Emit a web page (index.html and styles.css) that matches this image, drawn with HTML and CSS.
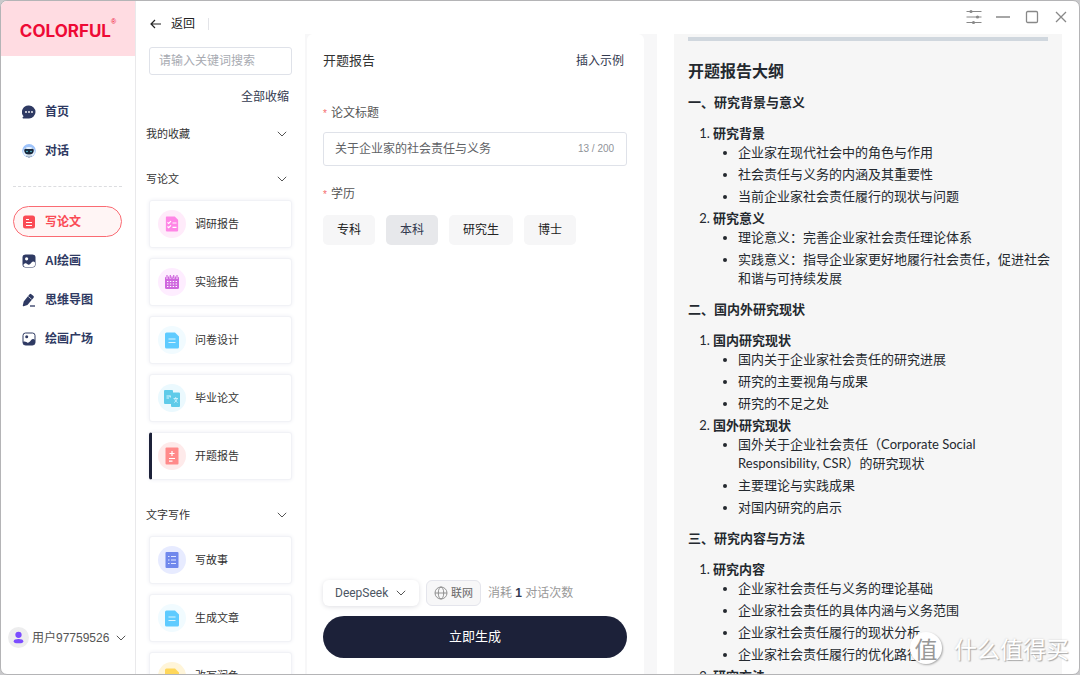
FILE: index.html
```html
<!DOCTYPE html>
<html lang="zh-CN">
<head>
<meta charset="utf-8">
<title>开题报告</title>
<link rel="stylesheet" href="styles.css">
</head>
<body>
<svg class="defs" aria-hidden="true">
  <symbol id="chev" viewBox="0 0 10 6"><path d="M.8.8 5 5 9.2.8" fill="none" stroke="currentColor" stroke-width="1"/></symbol>
  <symbol id="page" viewBox="0 0 14 16"><path d="M1.500 0H10l4 4v10.500a1.500 1.500 0 0 1-1.500 1.500h-11A1.500 1.500 0 0 1 0 14.500v-13A1.500 1.500 0 0 1 1.500 0z" fill="currentColor"/></symbol>
</svg>
<div class="window">
  <aside class="sidebar">
    <div class="brand"><span class="brand-name">COLORFUL</span><sup class="brand-reg">®</sup></div>
    <nav class="nav">
      <a class="nav-item" href="#"><svg class="nav-icon" viewBox="0 0 14 14"><path d="M7 .5a6.500 6.500 0 1 1 0 13H1.200a.7.7 0 0 1-.5-1.200l.9-1A6.500 6.500 0 0 1 7 .5z" fill="#2f3a63"/><g fill="#fff"><circle cx="4" cy="7" r=".9"/><circle cx="7" cy="7" r=".9"/><circle cx="10" cy="7" r=".9"/></g></svg>首页</a>
      <a class="nav-item" href="#"><svg class="nav-icon" viewBox="0 0 14 14"><circle cx="7" cy="6.800" r="6.800" fill="#9dc3fb"/><ellipse cx="7" cy="8" rx="5.800" ry="5" fill="#eaf4ff"/><path d="M2.200 6.300c0-1.200 1-1.500 2-1.500 1 .4 4.600.4 5.600 0 1 0 2 .3 2 1.500 0 2.800-1.500 4.200-4.800 4.200S2.200 9.100 2.200 6.300z" fill="#17283d"/><circle cx="5" cy="7.500" r=".8" fill="#5dd5e8"/><circle cx="9" cy="7.500" r=".8" fill="#5dd5e8"/><path d="M5 11.500v1.500M7 11.500v2.500M9 11.500v1.500" stroke="#56677a" stroke-width=".7"/></svg>对话</a>
      <hr class="nav-rule">
      <a class="nav-item active" href="#"><svg class="nav-icon" viewBox="0 0 14 14"><rect x="1" y=".5" width="12" height="13" rx="2.500" fill="#fa4b55"/><path d="M4 4.500h3M4 7.500h6M4 10.500h6" stroke="#fff" stroke-width="1.200"/></svg>写论文</a>
      <a class="nav-item" href="#"><svg class="nav-icon" viewBox="0 0 14 14"><rect x=".5" y=".5" width="13" height="13" rx="3" fill="#2f3a63"/><circle cx="4.600" cy="4.800" r="1.600" fill="#fff"/><path d="M1.500 10.500c2-2.500 3.500-1 4.500 0s2.500-.5 3.500-2 2.500-1.500 3.500 0v2a2.500 2.500 0 0 1-2.500 2.500h-7a2 2 0 0 1-2-2.500z" fill="#fff"/></svg>AI绘画</a>
      <a class="nav-item" href="#"><svg class="nav-icon" viewBox="0 0 14 14"><path d="M7.600 1.200a1.200 1.200 0 0 1 1.700 0l2.200 1.900a1.200 1.200 0 0 1 .1 1.600L5.400 12.100l-3.800 1.100a.6.600 0 0 1-.8-.8L1.700 8.400z" fill="#2f3a63"/><path d="M6.300 3.500l3.300 2.800" stroke="#fff" stroke-width=".7"/><path d="M8 13h5" stroke="#2f3a63" stroke-width="1.300"/></svg>思维导图</a>
      <a class="nav-item" href="#"><svg class="nav-icon" viewBox="0 0 14 14"><rect x="1" y="1" width="12" height="12" rx="2.500" fill="none" stroke="#2f3a63"/><circle cx="4.700" cy="4.800" r="1.500" fill="#2f3a63"/><path d="M1 9.800c2.500-.8 3.500.6 4.500.9s2.300-.8 3.500-2.500 3-1.600 4 0v3A2.500 2.500 0 0 1 10.500 13h-7A2.500 2.500 0 0 1 1 10.500z" fill="#2f3a63"/></svg>绘画广场</a>
    </nav>
    <button class="user" type="button">
      <svg class="avatar" viewBox="0 0 22 22"><circle cx="11" cy="11" r="11" fill="#ededee"/><circle cx="11" cy="8.200" r="3.300" fill="#7c4dff"/><ellipse cx="11" cy="14.800" rx="5" ry="2.300" fill="#7c4dff"/></svg>
      <span>用户97759526</span><svg class="chev"><use href="#chev"/></svg>
    </button>
  </aside>

  <div class="main">
    <header class="topbar">
      <button class="back" type="button"><svg class="back-icon" viewBox="0 0 12 10"><path d="M11 5H1.200M5 1 1 5l4 4" fill="none" stroke="#222" stroke-width="1.200"/></svg>返回</button>
      <div class="controls">
        <button type="button" aria-label="设置"><svg viewBox="0 0 16 16"><path d="M.5 2.500h15M.5 8h15M.5 13.500h15" stroke="#888" stroke-width="1"/><g fill="#888"><circle cx="5" cy="2.500" r="1.600"/><circle cx="11.500" cy="8" r="1.600"/><circle cx="7.500" cy="13.500" r="1.600"/></g></svg></button>
        <button type="button" aria-label="最小化"><svg viewBox="0 0 16 16"><path d="M1 8h14" stroke="#888" stroke-width="1.400"/></svg></button>
        <button type="button" aria-label="最大化"><svg viewBox="0 0 16 16"><rect x="2.500" y="2.500" width="11" height="11" rx="1.200" fill="none" stroke="#888" stroke-width="1.300"/></svg></button>
        <button type="button" aria-label="关闭"><svg viewBox="0 0 16 16"><path d="m3 3 10 10M13 3 3 13" stroke="#888" stroke-width="1.300"/></svg></button>
      </div>
    </header>

    <div class="columns">
      <section class="catalog">
        <input class="search" type="text" placeholder="请输入关键词搜索" aria-label="搜索">
        <button class="collapse" type="button">全部收缩</button>
        <button class="group" type="button">我的收藏<svg class="chev"><use href="#chev"/></svg></button>
        <button class="group" type="button">写论文<svg class="chev"><use href="#chev"/></svg></button>
        <div class="cards">
          <button class="card" type="button"><svg class="card-icon" viewBox="0 0 28 28"><circle cx="14" cy="14" r="14" fill="#ffebfa"/><svg class="pink" x="7.500" y="6" width="13" height="16"><use href="#page"/></svg><path d="m9.500 12.300 1.200 1.200 2.300-2.400M9.500 16.500l1.200 1.200 2.300-2.400M14.500 13h4M14.500 17.300h4" fill="none" stroke="#fff" stroke-width="1.200"/></svg>调研报告</button>
          <button class="card" type="button"><svg class="card-icon" viewBox="0 0 28 28"><circle cx="14" cy="14" r="14" fill="#feedff"/><rect x="7" y="8.500" width="14" height="12.500" rx="1.500" fill="#cf66de"/><path d="M9 7.500v3M12.300 7.500v3M15.700 7.500v3M19 7.500v3" stroke="#feedff" stroke-width="2"/><path d="M9 7v3M12.300 7v3M15.700 7v3M19 7v3" stroke="#cf66de" stroke-width="1.200"/><path d="M9 13.500h10M9 16h10M9 18.500h10" stroke="#fff" stroke-width="1.200" stroke-dasharray="1.400 1.460"/></svg>实验报告</button>
          <button class="card" type="button"><svg class="card-icon" viewBox="0 0 28 28"><circle cx="14" cy="14" r="14" fill="#f1fbff"/><svg class="blue" x="7" y="6" width="14" height="17"><use href="#page"/></svg><path d="M10.500 13h7M10.500 16.500h7" stroke="#d9f5ff" stroke-width="1.200"/></svg>问卷设计</button>
          <button class="card" type="button"><svg class="card-icon" viewBox="0 0 28 28"><circle cx="14" cy="14" r="14" fill="#ebf9fe"/><path d="M6 7a1 1 0 0 1 1-1h7a1 1 0 0 1 1 1v1.500h6a1 1 0 0 1 1 1V22a1 1 0 0 1-1 1h-7a1 1 0 0 1-1-1v-2H7a1 1 0 0 1-1-1z" fill="#5fcbe9"/><path d="M8.500 12h3.500M8.500 14h2.500M12.300 11.500v2" stroke="#d9f5ff" stroke-width="1"/><path d="M15.500 14.500h4.500M17.700 13v1.500M16.200 18.500c1.500-.8 2.500-2 2.800-3.800M19.500 18.500c-1.500-.8-2.500-2-2.800-3.800" fill="none" stroke="#d9f5ff" stroke-width=".8"/></svg>毕业论文</button>
          <button class="card selected" type="button"><svg class="card-icon" viewBox="0 0 28 28"><circle cx="14" cy="14" r="14" fill="#feeaea"/><rect x="7.500" y="5.500" width="13" height="17" rx="1" fill="#ff8a8a"/><path d="M11.500 11.500h5M14 9v5M11 16.500h6M11 19.200h3.500" stroke="#fff" stroke-width="1.200"/></svg>开题报告</button>
        </div>
        <button class="group" type="button">文字写作<svg class="chev"><use href="#chev"/></svg></button>
        <div class="cards">
          <button class="card" type="button"><svg class="card-icon" viewBox="0 0 28 28"><circle cx="14" cy="14" r="14" fill="#e7ebff"/><rect x="7.500" y="6" width="13" height="16" rx="1" fill="#7088ec"/><path d="M10 10.500h1.500M13 10.500h5M10 14h1.500M13 14h5M10 17.500h1.500M13 17.500h5" stroke="#dfe5ff" stroke-width="1.100"/></svg>写故事</button>
          <button class="card" type="button"><svg class="card-icon" viewBox="0 0 28 28"><circle cx="14" cy="14" r="14" fill="#f1fbff"/><svg class="blue" x="7" y="6" width="14" height="17"><use href="#page"/></svg><path d="M10.500 13h7M10.500 16.500h7" stroke="#d9f5ff" stroke-width="1.200"/></svg>生成文章</button>
          <button class="card" type="button"><svg class="card-icon" viewBox="0 0 28 28"><circle cx="14" cy="14" r="14" fill="#fff5d9"/><svg class="yellow" x="7" y="6" width="14" height="17"><use href="#page"/></svg></svg>改写润色</button>
        </div>
      </section>

      <div class="work">
        <form class="form">
          <div class="form-head"><h1 class="form-title">开题报告</h1><button class="example" type="button">插入示例</button></div>
          <label class="label" for="topic"><span class="star">*</span>论文标题</label>
          <div class="field"><input id="topic" class="field-input" type="text" value="关于企业家的社会责任与义务"><span class="count">13 / 200</span></div>
          <div class="label" id="degree"><span class="star">*</span>学历</div>
          <div class="choices" role="group" aria-labelledby="degree">
            <button class="choice" type="button">专科</button><button class="choice on" type="button" aria-pressed="true">本科</button><button class="choice" type="button">研究生</button><button class="choice" type="button">博士</button>
          </div>
          <div class="options">
            <div class="model"><select class="model-select" aria-label="模型"><option>DeepSeek</option></select><svg class="chev model-chev"><use href="#chev"/></svg></div>
            <button class="online" type="button"><svg class="globe" viewBox="0 0 14 14"><g fill="none" stroke="#888" stroke-width=".9"><circle cx="7" cy="7" r="6"/><ellipse cx="7" cy="7" rx="2.700" ry="6"/><path d="M1 7h12"/></g></svg>联网</button>
            <span class="cost">消耗 <b>1</b> 对话次数</span>
          </div>
          <button class="submit" type="button">立即生成</button>
        </form>
      </div>

      <article class="doc">
        <hr class="doc-rule">
        <h2>开题报告大纲</h2>
        <h3>一、研究背景与意义</h3>
        <ol>
          <li><strong>研究背景</strong>
            <ul><li>企业家在现代社会中的角色与作用</li><li>社会责任与义务的内涵及其重要性</li><li>当前企业家社会责任履行的现状与问题</li></ul></li>
          <li><strong>研究意义</strong>
            <ul><li>理论意义：完善企业家社会责任理论体系</li><li>实践意义：指导企业家更好地履行社会责任，促进社会和谐与可持续发展</li></ul></li>
        </ol>
        <h3>二、国内外研究现状</h3>
        <ol>
          <li><strong>国内研究现状</strong>
            <ul><li>国内关于企业家社会责任的研究进展</li><li>研究的主要视角与成果</li><li>研究的不足之处</li></ul></li>
          <li><strong>国外研究现状</strong>
            <ul><li>国外关于企业社会责任（Corporate Social Responsibility, CSR）的研究现状</li><li>主要理论与实践成果</li><li>对国内研究的启示</li></ul></li>
        </ol>
        <h3>三、研究内容与方法</h3>
        <ol>
          <li><strong>研究内容</strong>
            <ul><li>企业家社会责任与义务的理论基础</li><li>企业家社会责任的具体内涵与义务范围</li><li>企业家社会责任履行的现状分析</li><li>企业家社会责任履行的优化路径</li></ul></li>
          <li><strong>研究方法</strong></li>
        </ol>
      </article>
    </div>
  </div>
  <div class="watermark"><span class="mark">值</span><span>什么值得买</span></div>
</div>
</body>
</html>
```
FILE: styles.css
```css
* { box-sizing: border-box; }
body {
  margin: 0;
  background: #c9c9cb;
  color: #333;
  font: 12px/20px "Liberation Sans", "Noto Sans CJK SC", sans-serif;
}
button, input, select { font: inherit; color: inherit; }
button { padding: 0; border: 0; background: none; cursor: pointer; }
svg { flex: none; display: block; }
.defs { position: absolute; width: 0; height: 0; }
.chev { width: 10px; height: 6px; color: #555; }

.window {
  position: relative;
  display: flex;
  height: 100vh;
  overflow: hidden;
  background: #fff;
  border: 1px solid #b4b4b6;
  border-radius: 7px;
}

/* Sidebar */
.sidebar {
  display: flex;
  flex-direction: column;
  flex: none;
  width: 135px;
  border-right: 1px solid #e9e9eb;
}
.brand {
  display: flex;
  align-items: center;
  justify-content: center;
  height: 55px;
  padding-top: 4px;
  background: #ffdce2;
  color: #ee0a35;
}
.brand-name { font: 700 17px/20px Inter, sans-serif; }
.brand-reg { align-self: flex-start; padding-top: 10px; font-size: 7px; line-height: 14px; }
.nav { display: flex; flex-direction: column; gap: 8px; padding: 40px 13px 0 12px; }
.nav-item {
  display: flex;
  align-items: center;
  gap: 9px;
  height: 31px;
  padding-left: 8px;
  border: 1px solid transparent;
  border-radius: 16px;
  color: #2f3a63;
  font-weight: 700;
  text-decoration: none;
}
.nav-item.active { border-color: #fa6b73; background: #fff5f5; color: #fa4b55; }
.nav-icon { width: 14px; height: 14px; }
.nav-rule { width: 100%; margin: 12px 0 11px; border: 0; border-top: 1px dashed #dcdde0; }
.user {
  display: flex;
  align-items: center;
  gap: 3px;
  margin: auto 0 26px 7px;
  color: #555;
}
.user .chev { margin-left: 4px; }
.avatar { width: 21px; height: 21px; }

/* Top bar */
.main { display: flex; flex-direction: column; flex: 1; min-width: 0; }
.topbar { display: flex; justify-content: space-between; flex: none; height: 33px; }
.back {
  display: flex;
  align-items: center;
  gap: 9px;
  height: 12px;
  margin: 17px 0 0 14px;
  padding-right: 13px;
  border-right: 1px solid #e3e4e8;
  color: #222;
}
.back-icon { width: 12px; height: 10px; }
.controls { display: flex; gap: 13px; padding: 8px 10px 0 0; }
.controls button { height: 16px; }
.controls svg { width: 16px; height: 16px; }

.columns {
  display: grid;
  grid-template-columns: 169px minmax(0, 20fr) minmax(0, 23fr);
  flex: 1;
  min-height: 0;
  padding-right: 17px;
}

/* Catalog */
.catalog {
  display: flex;
  flex-direction: column;
  min-height: 0;
  overflow: hidden;
  padding: 13px 13px 0 10px;
}
.search {
  flex: none;
  height: 28px;
  margin-left: 3px;
  padding: 0 9px;
  border: 1px solid #dfe2e9;
  border-radius: 3px;
  background: #fff;
}
.search::placeholder { color: #a8abb2; opacity: 1; }
.collapse { align-self: flex-end; margin: 12px 3px 5px 0; color: #333a50; }
.group {
  display: flex;
  align-items: center;
  justify-content: space-between;
  flex: none;
  height: 43px;
  margin-bottom: 2px;
  padding-right: 5px;
  font-size: 11px;
}
.group + .cards { margin-top: -2px; }
.cards { display: flex; flex-direction: column; flex: none; gap: 10px; padding: 0 0 13px 3px; }
.card {
  display: flex;
  align-items: center;
  gap: 9px;
  height: 48px;
  padding-left: 8px;
  border: 1px solid #f1f2f6;
  border-radius: 3px;
  background: #fff;
  box-shadow: 0 0 4px #eeeff4;
  font-size: 11px;
}
.card.selected { padding-left: 6px; border-left: 3px solid #1c2139; }
.card-icon { width: 28px; height: 28px; }
.pink { color: #ff86e6; }
.blue { color: #5ecbff; }
.yellow { color: #ffd75a; }

/* Form */
.work { min-height: 0; padding: 0 13px 0 2px; background: #f7f7f8; }
.form {
  display: flex;
  flex-direction: column;
  height: 100%;
  padding: 17px 17px 16px 16px;
  border-radius: 6px 6px 0 0;
  background: #fff;
}
.form-head { display: flex; justify-content: space-between; align-items: center; margin-bottom: 32px; }
.form-title { margin: 0; font-size: 13px; font-weight: 400; line-height: 20px; }
.example { padding-right: 3px; color: #333a50; }
.label { display: block; color: #555; }
.star { margin-right: 4px; color: #f56c6c; font-size: 10px; }
.field {
  display: flex;
  align-items: center;
  height: 34px;
  margin: 8px 0 18px;
  padding: 0 12px 0 11px;
  border: 1px solid #dfe2e9;
  border-radius: 3px;
}
.field-input { flex: 1; min-width: 0; padding: 0; border: 0; outline: 0; background: none; color: #606266; }
.count { color: #909399; font-size: 10px; }
.choices { display: flex; gap: 11px; margin-top: 10px; }
.choice { height: 30px; padding: 0 14px; border-radius: 5px; background: #f6f6f7; color: #222; }
.choice.on { background: #e7e8eb; color: #333a50; }
.options { display: flex; align-items: center; gap: 7px; margin-top: auto; }
.model {
  position: relative;
  width: 96px;
  height: 26px;
  border-radius: 6px;
  box-shadow: 0 1px 5px #dfdfe3;
}
.model-select {
  width: 100%;
  height: 100%;
  padding: 0 12px;
  border: 0;
  appearance: none;
  background: none;
  color: #4c5663;
  font: 12px/20px Roboto, sans-serif;
}
.model-chev { position: absolute; right: 13px; top: 10px; pointer-events: none; }
.online {
  display: flex;
  align-items: center;
  gap: 3px;
  height: 26px;
  padding: 0 7px;
  border: 1px solid #e4e5ec;
  border-radius: 6px;
  background: #f7f7f8;
  color: #666;
  font-size: 11px;
}
.globe { width: 14px; height: 14px; }
.cost { color: #999; }
.cost b { color: #333a50; }
.submit { height: 42px; margin-top: 10px; border-radius: 21px; background: #1c2139; color: #fff; font-size: 13px; }

/* Outline document */
.doc {
  min-height: 0;
  overflow: hidden;
  margin-left: 17px;
  padding: 3px 10px 0 14px;
  background: #f6f6f6;
  color: #24292f;
  font: 13px/19px Lato, "Noto Sans CJK SC", sans-serif;
}
.doc-rule { height: 4px; margin: 0 4px 18px 0; border: 0; background: #d0d7de; }
.doc h2 { margin: 0 0 10px; font-size: 16px; line-height: 24px; }
.doc h3 { margin: 12px 0; font-size: 13px; line-height: 19px; }
.doc h2 + h3 { margin-top: 10px; }
.doc ol, .doc ul { margin: 0; padding-left: 25px; }
.doc ul { list-style: disc; }
.doc li + li { margin-top: 3px; }

/* Watermark */
.watermark {
  position: absolute;
  right: 10px;
  bottom: 10px;
  display: flex;
  align-items: center;
  gap: 12px;
  color: #fff;
  font: 23px/32px "Noto Sans CJK SC", sans-serif;
  text-shadow: 1px 1px 1px #aaa, 0 0 2px #ccc;
}
.mark {
  width: 32px;
  height: 32px;
  border-radius: 50%;
  background: #fff;
  box-shadow: 1px 1px 2px #aaa;
  color: #999;
  text-align: center;
  text-shadow: none;
}
```
